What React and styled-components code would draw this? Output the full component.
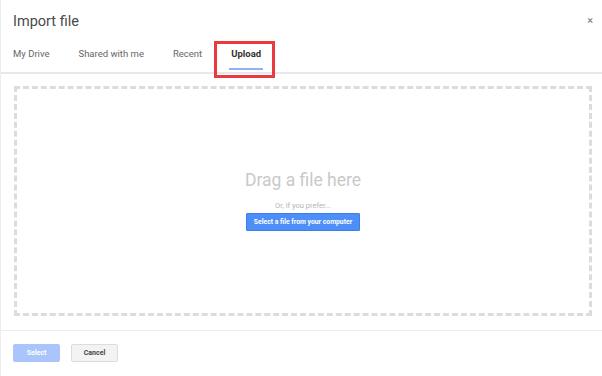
import React from "react";
import styled, { createGlobalStyle } from "styled-components";

const GlobalStyle = createGlobalStyle`
  html, body {
    margin: 0;
    padding: 0;
    background: #fff;
  }
  body {
    font-family: Roboto, "Liberation Sans", Arial, sans-serif;
  }
  * {
    box-sizing: border-box;
  }
`;

const Dialog = styled.div`
  width: 602px;
  height: 376px;
  border-left: 1px solid #ececec;
  background: #fff;
  display: flex;
  flex-direction: column;
`;

const Header = styled.div`
  height: 40px;
  padding: 0 9px 0 12px;
  display: flex;
  align-items: center;
  justify-content: space-between;
`;

const Title = styled.div`
  font-size: 14.5px;
  color: #4a4a4a;
  padding-top: 2px;
`;

const Close = styled.div`
  font-size: 11px;
  color: #777;
  line-height: 1;
  margin-top: 1px;
`;

const TabBar = styled.div`
  height: 34px;
  padding: 0 10px;
  display: flex;
  align-items: stretch;
  gap: 25px;
  border-bottom: 2px solid #e6e8ee;
`;

const Tab = styled.div`
  position: relative;
  padding: 0 2px 6px;
  display: flex;
  align-items: center;
  font-size: 9.5px;
  color: ${p => (p.active ? "#333" : "#666")};
  font-weight: ${p => (p.active ? 700 : 400)};
  ${p =>
    p.active &&
    `
    &::before {
      content: "";
      position: absolute;
      left: 0;
      right: 0;
      bottom: 2px;
      height: 2px;
      background: #8fb2f5;
    }
    &::after {
      content: "";
      position: absolute;
      left: -15px;
      right: -12px;
      top: 1px;
      bottom: -6px;
      border: 3px solid #ea3a3f;
    }
  `}
`;

const Body = styled.div`
  flex: 1;
  padding: 12px 10px 14px 13px;
  display: flex;
`;

const DropZone = styled.div`
  flex: 1;
  border: 3px dashed #dcdcdc;
  display: flex;
  flex-direction: column;
  align-items: center;
  justify-content: center;
  padding-bottom: 2px;
`;

const DragText = styled.div`
  font-size: 17.5px;
  color: #c9c9c9;
`;

const PreferText = styled.div`
  font-size: 7.5px;
  color: #b5b5b5;
  margin-top: 11px;
`;

const PickButton = styled.button`
  margin-top: 3px;
  height: 18px;
  padding: 0 7px;
  border: 1px solid #3b7cf0;
  border-radius: 1px;
  background: #4d8ff7;
  color: #fff;
  font-family: inherit;
  font-size: 6.8px;
  font-weight: 700;
`;

const Footer = styled.div`
  height: 46px;
  border-top: 1px solid #ececec;
  padding: 13px 12px 0;
  display: flex;
  align-items: flex-start;
  gap: 11px;
`;

const Button = styled.button`
  height: 18px;
  width: 47px;
  border-radius: 2px;
  font-family: inherit;
  font-size: 7px;
  font-weight: 700;
  border: 1px solid ${p => (p.primary ? "#a9c5fb" : "#dcdcdc")};
  background: ${p => (p.primary ? "#a9c5fb" : "#f3f3f3")};
  color: ${p => (p.primary ? "#fff" : "#444")};
`;

export default function App() {
  return (
    <>
      <GlobalStyle />
      <Dialog>
        <Header>
          <Title>Import file</Title>
          <Close>×</Close>
        </Header>
        <TabBar>
          <Tab>My Drive</Tab>
          <Tab>Shared with me</Tab>
          <Tab>Recent</Tab>
          <Tab active>Upload</Tab>
        </TabBar>
        <Body>
          <DropZone>
            <DragText>Drag a file here</DragText>
            <PreferText>Or, if you prefer...</PreferText>
            <PickButton>Select a file from your computer</PickButton>
          </DropZone>
        </Body>
        <Footer>
          <Button primary>Select</Button>
          <Button>Cancel</Button>
        </Footer>
      </Dialog>
    </>
  );
}
